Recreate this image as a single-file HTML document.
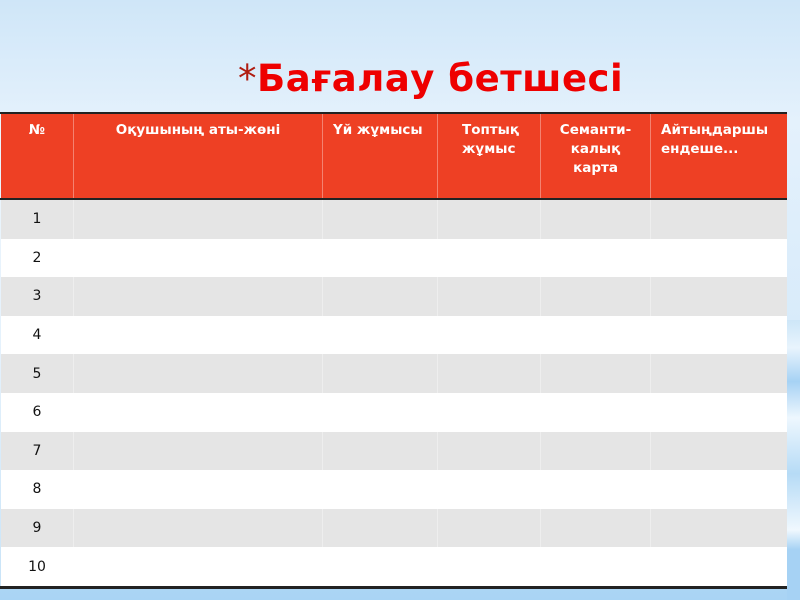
<!DOCTYPE html>
<html><head><meta charset="utf-8"><style>
body{margin:0;width:800px;height:600px;overflow:hidden;position:relative;font-family:"DejaVu Sans","Liberation Sans",sans-serif;
background:linear-gradient(180deg,#cfe6f8 0%,#e4f1fc 20%,#d6eafa 60%,#a9d4f4 100%);}
.side{position:absolute;right:0;top:320px;width:13px;height:280px;background:linear-gradient(180deg,#cde6f8 0%,#e8f4fd 10%,#a6d2f4 22%,#eef7fe 35%,#b6dbf6 55%,#f0f8fe 75%,#a6d2f4 82%)}
.title{position:absolute;left:238px;top:57px;font-size:37px;font-weight:bold;color:#ee0000;white-space:nowrap;letter-spacing:0.5px}
.title span{color:#b01c10;font-weight:normal}
table{position:absolute;left:0;top:112px;width:787px;border-collapse:collapse;border-top:2px solid #222;border-bottom:3px solid #222}
td,th{padding:0;border-left:1px solid rgba(255,255,255,0.35)}
th{background:#ee4024;color:#fff;font-size:13.5px;font-weight:bold;height:86px;vertical-align:top;text-align:left;padding-top:7px;line-height:19px;border-bottom:2px solid #222;box-sizing:border-box}
td{height:38.6px;font-size:14px;color:#111}
tr:nth-child(even) td{background:#e5e5e5}
tr:nth-child(odd) td{background:#fff}
td:first-child{text-align:center}
</style></head><body>
<div class="side"></div>
<div class="title"><span>*</span>Бағалау бетшесі</div>
<table>
<tr><th style="width:73px;text-align:center">№</th><th style="width:249px;text-align:center">Оқушының аты-жөні</th><th style="width:115px;padding-left:10px">Үй жұмысы</th><th style="width:103px;padding-left:24px">Топтық<br>жұмыс</th><th style="width:110px;text-align:center">Семанти-<br>калық<br>карта</th><th style="padding-left:10px">Айтыңдаршы<br>ендеше...</th></tr>
<tr><td>1</td><td></td><td></td><td></td><td></td><td></td></tr>
<tr><td>2</td><td></td><td></td><td></td><td></td><td></td></tr>
<tr><td>3</td><td></td><td></td><td></td><td></td><td></td></tr>
<tr><td>4</td><td></td><td></td><td></td><td></td><td></td></tr>
<tr><td>5</td><td></td><td></td><td></td><td></td><td></td></tr>
<tr><td>6</td><td></td><td></td><td></td><td></td><td></td></tr>
<tr><td>7</td><td></td><td></td><td></td><td></td><td></td></tr>
<tr><td>8</td><td></td><td></td><td></td><td></td><td></td></tr>
<tr><td>9</td><td></td><td></td><td></td><td></td><td></td></tr>
<tr><td>10</td><td></td><td></td><td></td><td></td><td></td></tr>
</table>
</body></html>
